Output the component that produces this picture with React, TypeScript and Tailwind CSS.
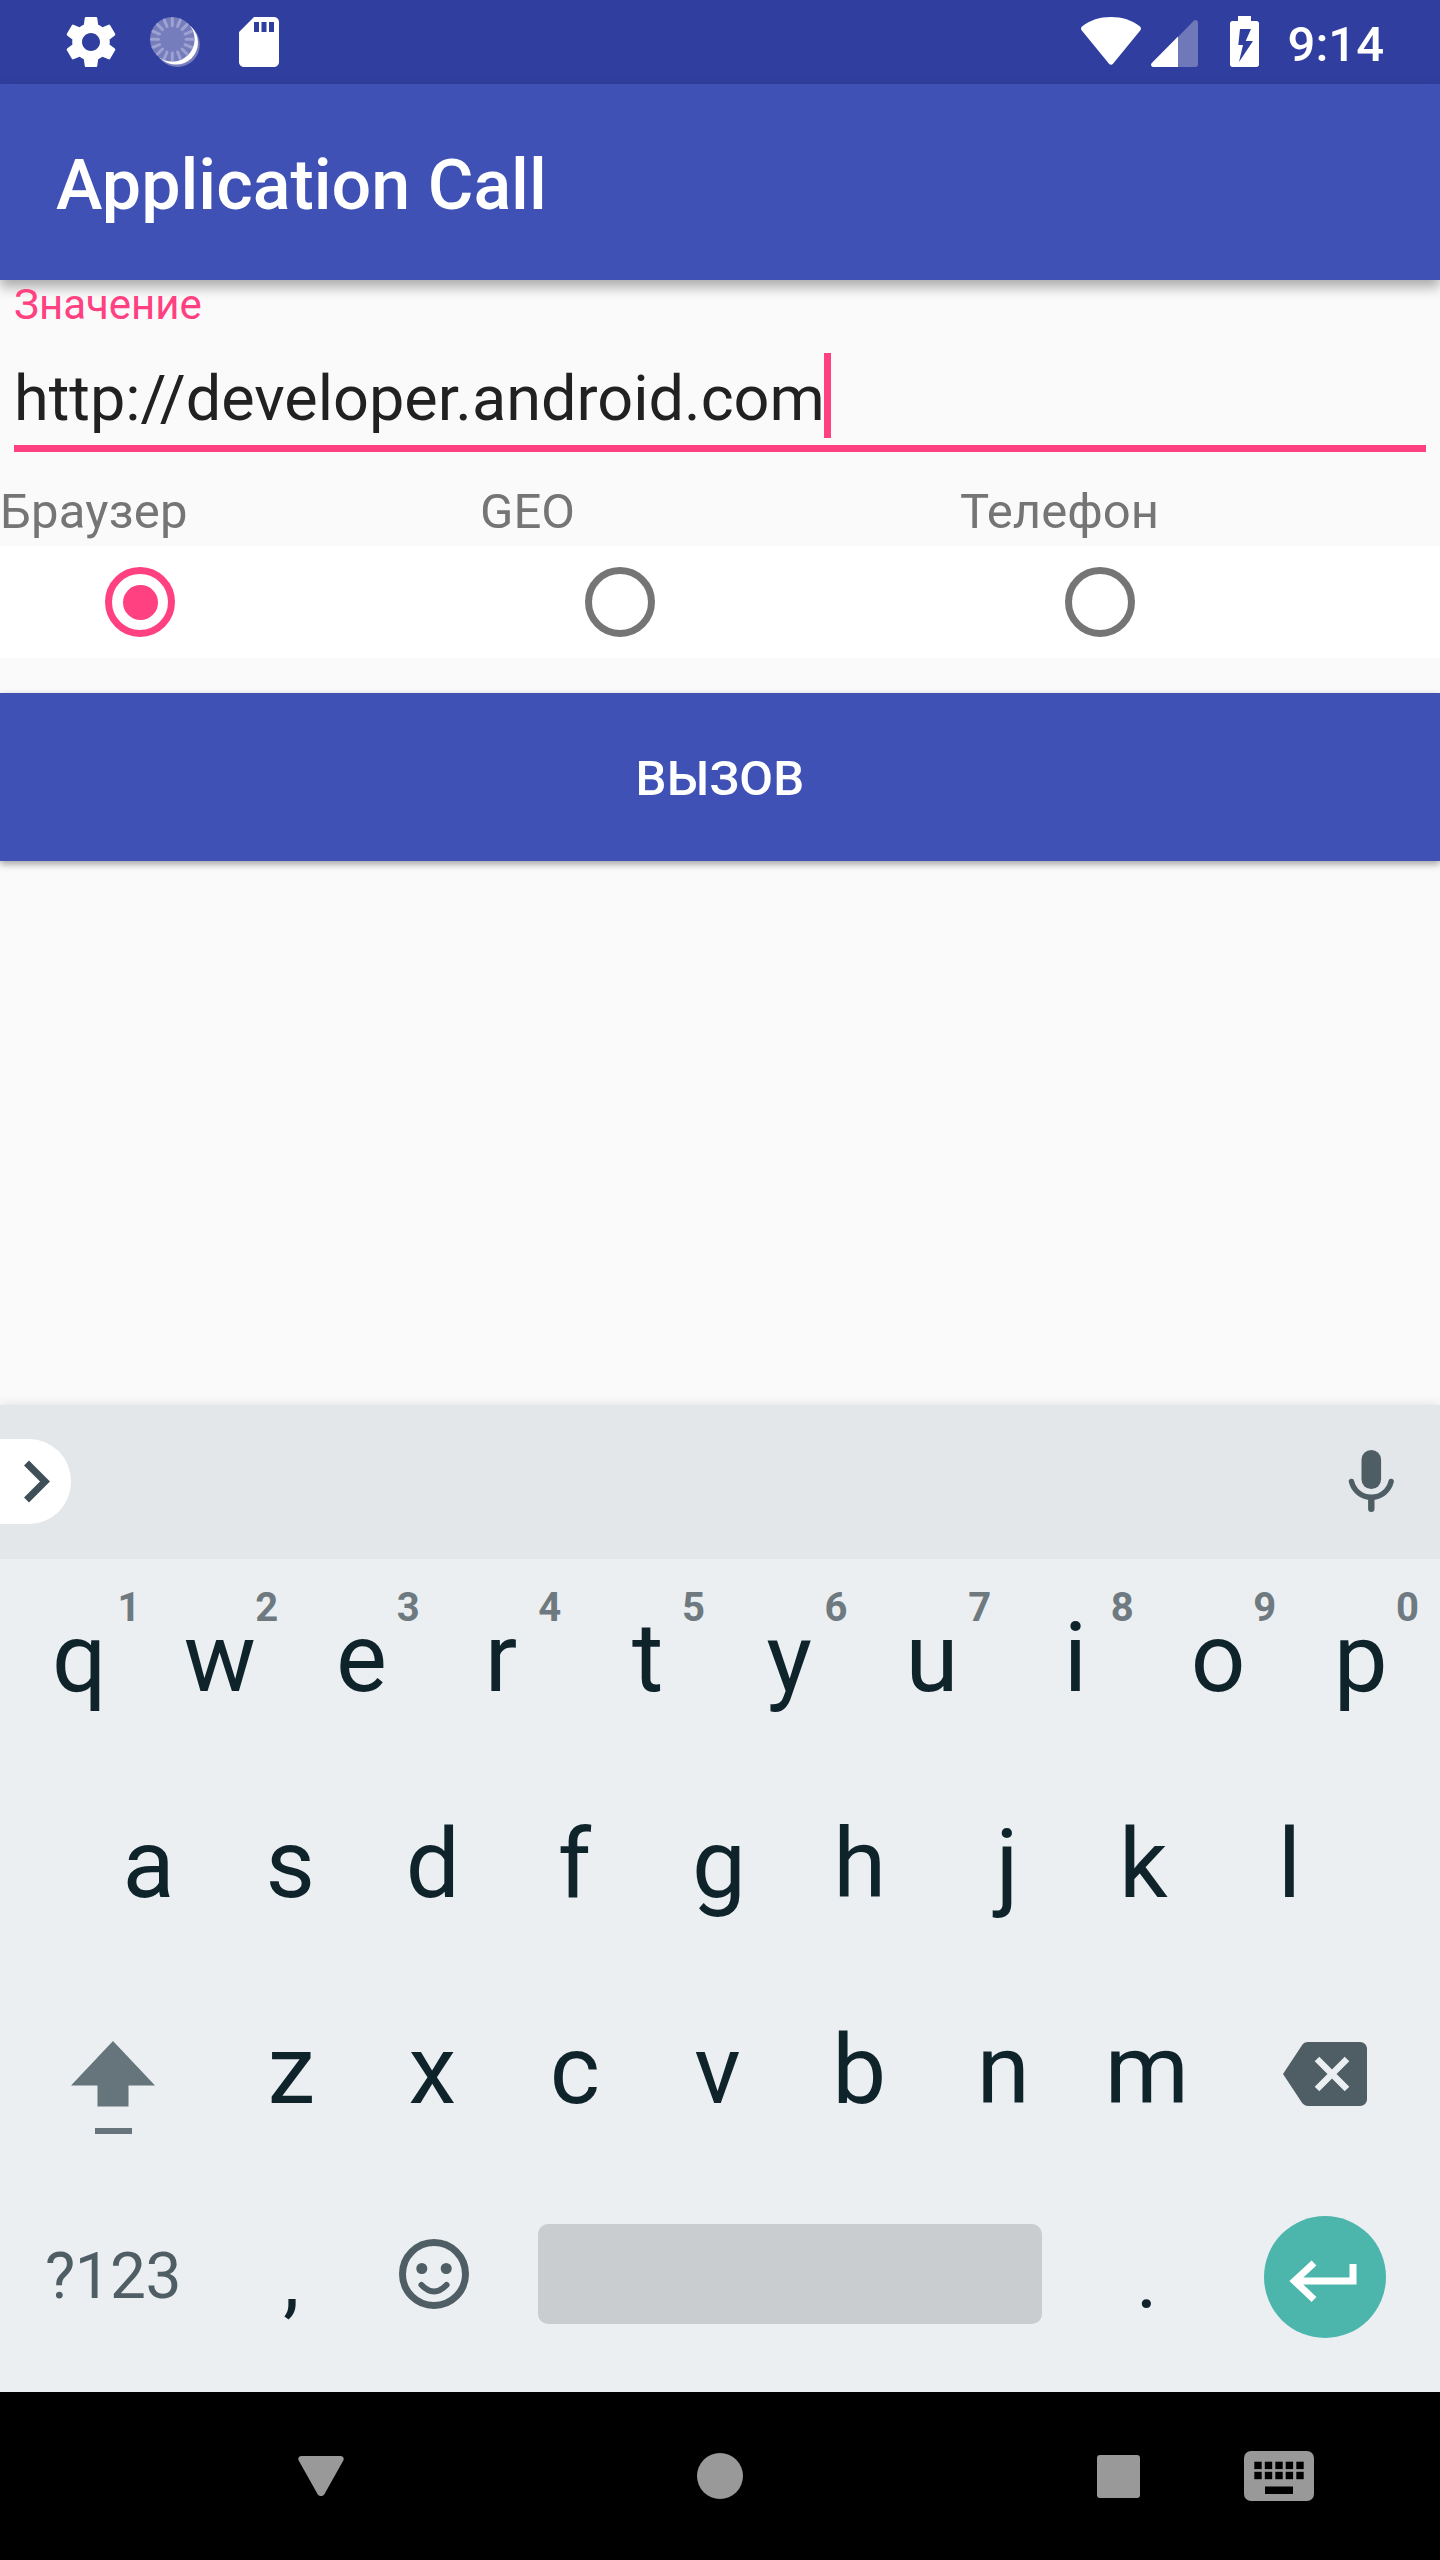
import React from "react";

const topRow = ["q", "w", "e", "r", "t", "y", "u", "i", "o", "p"];
const middleRow = ["a", "s", "d", "f", "g", "h", "j", "k", "l"];
const bottomRow = ["z", "x", "c", "v", "b", "n", "m"];
const rayAngles = Array.from({ length: 16 }, (_, i) => i * 22.5);

// Optical centring of the key caps, in pixels.
const nudge: Record<string, number> = {
  q: 2, e: -1, r: -4, u: -1, y: -1, s: -1, d: -1, f: -2, h: -2, j: 3, k: -3.5,
  x: -1.5, c: -1.5, v: -1.5, b: -2.5, n: -1, "1": 5, "3": -1, "4": -2, "5": -1, "6": -1,
};

function Key({ label, hint }: { label: string; hint?: string }) {
  return (
    <div className="relative flex h-full w-[142.6px] items-center justify-center pb-[8px] text-[96px] leading-none">
      <span style={{ transform: `translateX(${nudge[label] ?? 0}px)` }}>{label}</span>
      {hint && (
        <span
          className="absolute left-[118px] top-[29px] flex w-0 justify-center text-[40px] leading-[40px] font-bold text-[#6e7a80]"
          style={{ transform: `translateX(${nudge[hint] ?? 0}px)` }}
        >
          {hint}
        </span>
      )}
    </div>
  );
}

function PunctuationKey({ label }: { label: string }) {
  return <div className="flex h-full w-[142.6px] items-center justify-center text-[82px] leading-none">{label}</div>;
}

function StatusBar() {
  return (
    <div className="flex h-[84px] items-center justify-between bg-[#303f9f] pl-[61px] pr-[56px] text-white">
      <div className="flex items-center">
        <svg width="60" height="60" viewBox="0 0 24 24" fill="currentColor">
          <path d="M19.43 12.98c.04-.32.07-.64.07-.98s-.03-.66-.07-.98l2.11-1.65c.19-.15.24-.42.12-.64l-2-3.46c-.12-.22-.39-.3-.61-.22l-2.49 1c-.52-.4-1.08-.73-1.69-.98l-.38-2.65C14.46 2.18 14.25 2 14 2h-4c-.25 0-.46.18-.49.42l-.38 2.65c-.61.25-1.17.59-1.69.98l-2.49-1c-.23-.09-.49 0-.61.22l-2 3.46c-.13.22-.07.49.12.64l2.11 1.65c-.04.32-.07.65-.07.98s.03.66.07.98l-2.11 1.65c-.19.15-.24.42-.12.64l2 3.46c.12.22.39.3.61.22l2.49-1c.52.4 1.08.73 1.69.98l.38 2.65c.03.24.24.42.49.42h4c.25 0 .46-.18.49-.42l.38-2.65c.61-.25 1.17-.59 1.69-.98l2.49 1c.23.09.49 0 .61-.22l2-3.46c.12-.22.07-.49-.12-.64l-2.11-1.65zM12 15.6c-1.98 0-3.6-1.62-3.6-3.6s1.62-3.6 3.6-3.6 3.6 1.62 3.6 3.6-1.62 3.6-3.6 3.6z" />
        </svg>
        <svg className="ml-[24px]" width="60" height="60" viewBox="0 0 60 60">
          <circle cx="32.4" cy="32.6" r="22.4" fill="#767dbd" />
          <circle cx="31" cy="30.6" r="22" fill="#fff" />
          <circle cx="27.3" cy="27.3" r="22.3" fill="#767dbd" />
          {rayAngles.map((a) => (
            <path key={a} d="M27.3 6.5v7" stroke="#9da2d1" strokeWidth="3" strokeLinecap="round" transform={`rotate(${a} 27.3 27.3)`} />
          ))}
        </svg>
        <svg className="ml-[24px]" width="60" height="60" viewBox="0 0 24 24" fill="currentColor">
          <path d="M18 2h-8L4.02 8 4 20c0 1.1.9 2 2 2h12c1.1 0 2-.9 2-2V4c0-1.1-.9-2-2-2zm-6 6h-2V4h2v4zm3 0h-2V4h2v4zm3 0h-2V4h2v4z" />
        </svg>
      </div>
      <div className="flex items-center">
        <svg width="60" height="60" viewBox="0 0 60 60" fill="currentColor">
          <path d="M1 14.5C9 8 19 5 30 5s21 3 29 9.500c1.200 1 1.300 2.500.4 3.700L32 51.800c-1.100 1.400-2.900 1.400-4 0L.6 18.200C-.3 17-.2 15.500 1 14.500z" />
        </svg>
        <svg className="ml-[10px]" width="47" height="60" viewBox="0 0 47 60">
          <path d="M27 25 42.500 8.900C44.300 7.200 47 8.400 47 11v41.500c0 1.500-1 2.500-2.500 2.500H27z" fill="#6f78b9" />
          <path d="M27 24.600V55H2.200C0 55-.7 52.400 .8 50.900z" fill="#fff" />
        </svg>
        <svg className="ml-[32px]" width="29" height="60" viewBox="0 0 29 60">
          <path fillRule="evenodd" fill="#fff" d="M8 4h13v5h5.500C28 9 29 10 29 11.500v41c0 1.500-1 2.500-2.500 2.500h-24C1 55 0 54 0 52.500v-41C0 10 1 9 2.500 9H8zM10 17 8.300 33H13L9 50 23 29h-7.300L21 17z" />
        </svg>
        <span className="ml-[28.5px] mt-[5px] text-[49px] leading-none font-medium">9:14</span>
      </div>
    </div>
  );
}

function Radio({ checked }: { checked?: boolean }) {
  return (
    <div className="flex flex-1 items-center pl-[105px]">
      <div className={checked ? "flex size-[70px] items-center justify-center rounded-full border-[7px] border-[#ff4081]" : "size-[70px] rounded-full border-[7px] border-[#757575]"}>
        {checked && <div className="size-[35px] rounded-full bg-[#ff4081]" />}
      </div>
    </div>
  );
}

function Keyboard() {
  return (
    <div className="relative flex h-[987px] flex-col bg-[#ebeff2] text-[#0f232b] shadow-[0_0_10px_rgba(0,0,0,0.12)]">
      <div className="flex h-[154px] items-center justify-between bg-[#e3e7ea] pr-[39px]">
        <div className="mb-[1px] flex h-[85px] w-[71px] items-center rounded-r-[42px] bg-white">
          <svg width="71" height="85" viewBox="0 0 71 85" fill="none" stroke="#3f4f57" strokeWidth="7">
            <path d="M26.500 24 45 42.500 26.500 61" />
          </svg>
        </div>
        <svg width="60" height="70" viewBox="0 0 60 70" fill="none" stroke="#4f5d65" strokeLinecap="round">
          <rect x="20.500" y="3" width="19.600" height="39" rx="9.800" fill="#4f5d65" stroke="none" />
          <path d="M10.500 34.500a20.300 20.300 0 0 0 39.600 0" strokeWidth="5.500" />
          <path d="M30.300 52v9.800" strokeWidth="6.400" />
        </svg>
      </div>
      <div className="flex h-[206px] justify-center pr-[2px]">
        {topRow.map((k, i) => (
          <Key key={k} label={k} hint={String((i + 1) % 10)} />
        ))}
      </div>
      <div className="flex h-[206px] justify-center pr-[2px]">
        {middleRow.map((k) => (
          <Key key={k} label={k} />
        ))}
      </div>
      <div className="flex h-[206px] items-center justify-center pr-[2px]">
        <div className="flex w-[213.9px] justify-center">
          <svg width="90" height="120" viewBox="0 -7 90 120" fill="#66747b">
            <path d="M45 20 87 64.500H60.500V85.500H29.500V64.500H3z" />
            <path d="M27 107h37v6H27z" />
          </svg>
        </div>
        {bottomRow.map((k) => (
          <Key key={k} label={k} />
        ))}
        <div className="flex w-[213.9px] justify-center">
          <svg width="84" height="64" viewBox="0 0 84 64">
            <path d="M25 0h52c4 0 7 3 7 7v50c0 4-3 7-7 7H25c-2.500 0-4.600-1.200-6-3.200L0 32 19 3.200C20.400 1.200 22.500 0 25 0z" fill="#4f5d65" />
            <path d="M34 17 64 47M64 17 34 47" stroke="#ebeff2" strokeWidth="6.500" />
          </svg>
        </div>
      </div>
      <div className="flex h-[206px] items-center justify-center pr-[2px]">
        <div className="flex w-[213.9px] justify-center pb-[6px] text-[64px] leading-none tracking-[-0.6px] text-[#4f5d65]">?123</div>
        <PunctuationKey label="," />
        <div className="flex w-[142.6px] justify-center pb-[12px]">
          <svg width="70" height="70" viewBox="0 0 70 70" fill="none" stroke="#4f5d65">
            <circle cx="35" cy="35" r="31.500" strokeWidth="7" />
            <circle cx="22.800" cy="29.500" r="5.500" fill="#4f5d65" stroke="none" />
            <circle cx="47.200" cy="29.500" r="5.500" fill="#4f5d65" stroke="none" />
            <path d="M22.500 46q12.500 13 25 0" strokeWidth="6" strokeLinecap="round" />
          </svg>
        </div>
        <div className="flex w-[570.4px] justify-center pb-[12px]">
          <div className="h-[100px] w-[504px] rounded-[10px] bg-[#c9cdd0]" />
        </div>
        <PunctuationKey label="." />
        <div className="flex w-[213.9px] justify-center pb-[7px]">
          <div className="flex size-[122px] items-center justify-center rounded-full bg-[#4db6ac]">
            <svg width="122" height="122" viewBox="0 0 122 122" fill="none" stroke="#fff" strokeWidth="7">
              <path d="M89 48V65H31M50 47 30.500 65 50 83.500" />
            </svg>
          </div>
        </div>
      </div>
    </div>
  );
}

export default function App() {
  return (
    <div className="flex h-[2560px] w-[1440px] flex-col overflow-hidden bg-[#fafafa] font-['Roboto',sans-serif]">
      <StatusBar />
      <div className="flex h-[196px] items-center bg-[#3f51b5] pl-[56px] pt-[6px] text-[70px] leading-none font-medium text-white shadow-[0_7px_12px_rgba(0,0,0,0.32)]">
        Application Call
      </div>
      <div className="flex h-[172px] flex-col px-[14px]">
        <div className="mt-[4px] h-[42px] text-[42px] leading-[42px] text-[#ff4081]">Значение</div>
        <div className="mt-[27px] flex h-[85px] items-center">
          <span className="pt-[6px] text-[63px] leading-[79px] text-[#212121]">http://developer.android.com</span>
          <span className="-ml-[1px] h-[85px] w-[7px] bg-[#ff4081]" />
        </div>
        <div className="mt-[7px] h-[7px] bg-[#ff4081]" />
      </div>
      <div className="flex h-[94px] pt-[31px] text-[49px] leading-[58px] text-[#757575]">
        <span className="flex-1 tracking-[0.2px]">Браузер</span>
        <span className="flex-1">GEO</span>
        <span className="flex-1">Телефон</span>
      </div>
      <div className="flex h-[112px] bg-white">
        <Radio checked />
        <Radio />
        <Radio />
      </div>
      <button className="mt-[35px] flex h-[168px] w-full items-center justify-center bg-[#3f51b5] pt-[3px] text-[49px] leading-none font-medium tracking-[0.2px] text-white shadow-[0_3px_7px_rgba(0,0,0,0.36)]">
        ВЫЗОВ
      </button>
      <div className="flex-1" />
      <Keyboard />
      <div className="flex h-[168px] items-center bg-black">
        <svg className="ml-[298px]" width="46" height="42" viewBox="0 0 46 42" fill="#999">
          <path d="M3.500 1h39c2.500 0 4 2.300 2.800 4.500L26.500 39c-1.500 2.700-5.500 2.700-7 0L.7 5.500C-.5 3.300 1 1 3.500 1z" />
        </svg>
        <div className="ml-[352.5px] size-[46px] rounded-full bg-[#999]" />
        <div className="ml-[354px] size-[43px] rounded-[3px] bg-[#999]" />
        <svg className="ml-[104.5px]" width="70" height="50" viewBox="0 0 70 50">
          <rect width="70" height="50" rx="7" fill="#999" />
          {[10.3, 20.8, 31.3, 41.7, 52.3].map((x) => (
            <g key={x}>
              <rect x={x} y="10.700" width="7.400" height="7.400" />
              <rect x={x} y="20.800" width="7.400" height="7.400" />
            </g>
          ))}
          <rect x="21" y="35.500" width="28" height="7.500" />
        </svg>
      </div>
    </div>
  );
}
